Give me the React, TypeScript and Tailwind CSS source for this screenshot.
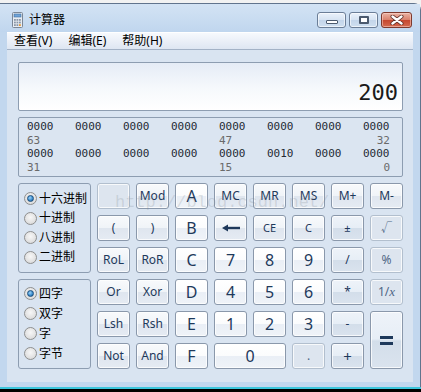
import type { ReactNode } from 'react';

type Kind = 'fn' | 'num' | 'op' | 'off';

const kindCls: Record<Kind, string> = {
  fn: 'border-[#8a98ab] bg-[linear-gradient(to_bottom,#f8fafc_0%,#f0f4f8_48%,#dfe6ef_52%,#e5ebf3_100%)] text-[#1e395b]',
  num: 'border-[#8a98ab] bg-[linear-gradient(to_bottom,#ffffff_0%,#fbfcfd_48%,#eaeff6_52%,#eff3f8_100%)] text-[#1e395b]',
  op: 'border-[#8a98ab] bg-[linear-gradient(to_bottom,#eef3f9_0%,#e7eef6_48%,#d3deea_52%,#dae3ee_100%)] text-[#1e395b]',
  off: 'border-[#b2bfce] bg-[#dde5ef] text-[#4f6786]',
};

const Key = ({ kind = 'fn', size = 'text-[12px]', className = '', children }: { kind?: Kind; size?: string; className?: string; children?: ReactNode }) => (
  <div
    className={`flex items-center justify-center rounded-[3px] border shadow-[inset_0_0_0_1px_rgba(255,255,255,0.75)] ${kindCls[kind]} ${size} ${className}`}
  >
    {children}
  </div>
);

const Radio = ({ label, checked = false }: { label: string; checked?: boolean }) => (
  <div className="flex h-[19.5px] items-center gap-[2px]">
    <span className="flex h-[13px] w-[13px] items-center justify-center rounded-full border border-[#8e8f8f] bg-[radial-gradient(circle_at_50%_40%,#f7f7f7_0%,#e2e2e2_60%,#d0d0d0_100%)]">
      {checked && (
        <span className="h-[7px] w-[7px] rounded-full border border-[#1b4f7e] bg-[radial-gradient(circle_at_40%_35%,#9fd2f5_0%,#3d8fd0_55%,#17548f_100%)]" />
      )}
    </span>
    <span className="text-[12px] leading-none text-black">{label}</span>
  </div>
);

const bitsTop = ['0000', '0000', '0000', '0000', '0000', '0000', '0000', '0000'];
const bitsBottom = ['0000', '0000', '0000', '0000', '0000', '0010', '0000', '0000'];

const BitRow = ({ groups }: { groups: string[] }) => (
  <div className="flex justify-between text-[#252b34]">
    {groups.map((g, i) => (
      <span key={i} className="w-[27px]">{g}</span>
    ))}
  </div>
);

const LabelRow = ({ a, b, c }: { a: string; b: string; c: string }) => (
  <div className="flex justify-between text-[#6a6a6a]">
    {[a, '', '', '', b, '', '', c].map((t, i) => (
      <span key={i} className={`w-[27px] ${i === 7 ? 'text-right' : ''}`}>{t}</span>
    ))}
  </div>
);

const CalcIcon = () => (
  <svg width="11" height="16" viewBox="0 0 11 16">
    <rect x="0.5" y="0.5" width="10" height="15" rx="1" fill="#e8edf3" stroke="#7b8796" />
    <rect x="2" y="2" width="7" height="3" fill="#6fa3d8" stroke="#3d6e9f" strokeWidth="0.6" />
    {[0, 1, 2].map(r =>
      [0, 1, 2].map(c => (
        <rect key={`${r}${c}`} x={2 + c * 2.5} y={7 + r * 2.6} width="1.8" height="1.8" fill={r === 2 && c === 2 ? '#e7962f' : '#8a96a6'} />
      ))
    )}
  </svg>
);

export default function App() {
  return (
    <div className="relative flex h-[392px] w-[421px] flex-col overflow-hidden bg-[#f2f2f2] font-['Noto_Sans','Noto_Sans_CJK_SC',sans-serif]">
      <div className="h-[3px] shrink-0" />

      <div className="flex flex-1 flex-col rounded-tr-[7px] border-t border-r border-[#61748d] bg-[#c2d7ee]">
        {/* title bar */}
        <div className="flex h-[28px] shrink-0 items-center bg-[linear-gradient(to_bottom,#d3e3f4,#c0d6ee)] pl-[12px] pr-[8px] pt-[4px]">
          <CalcIcon />
          <span className="ml-[6px] text-[12px] leading-none text-black">计算器</span>
          <div className="ml-auto flex gap-[3px]">
            <div className="flex h-[16px] w-[29px] items-end justify-center rounded-[3px] border border-[#6b7e97] bg-[linear-gradient(to_bottom,#eaf2fb_0%,#d6e3f2_50%,#c3d5ea_51%,#cfdff0_100%)] pb-[3px] shadow-[inset_0_0_0_1px_rgba(255,255,255,0.6)]">
              <span className="h-[4px] w-[12px] rounded-[1px] border border-[#4b5a6e] bg-white" />
            </div>
            <div className="flex h-[16px] w-[29px] items-center justify-center rounded-[3px] border border-[#6b7e97] bg-[linear-gradient(to_bottom,#eaf2fb_0%,#d6e3f2_50%,#c3d5ea_51%,#cfdff0_100%)] shadow-[inset_0_0_0_1px_rgba(255,255,255,0.6)]">
              <span className="h-[8px] w-[10px] rounded-[1px] border-2 border-[#4b5a6e] bg-white" />
            </div>
            <div className="flex h-[16px] w-[31px] items-center justify-center rounded-[3px] border border-[#7e3a2e] bg-[linear-gradient(to_bottom,#eab3a4_0%,#d9806b_50%,#c5472f_51%,#d46a4f_100%)] shadow-[inset_0_0_0_1px_rgba(255,220,210,0.5)]">
              <svg width="14" height="10" viewBox="0 0 14 10">
                <path d="M2.5 1.5 L11.5 8.5 M11.5 1.5 L2.5 8.5" stroke="#5a2a22" strokeWidth="4" strokeLinecap="round" />
                <path d="M2.5 1.5 L11.5 8.5 M11.5 1.5 L2.5 8.5" stroke="#ffffff" strokeWidth="2.4" strokeLinecap="round" />
              </svg>
            </div>
          </div>
        </div>

        <div className="flex flex-1 flex-col pl-[7px] pr-[7px]">
          {/* menu bar */}
          <div className="flex h-[18px] shrink-0 items-center gap-[16px] border-t border-b border-t-white border-b-[#a3b2c6] bg-[linear-gradient(to_bottom,#f7f9fd,#dee6f2)] pl-[7px] text-[12px] leading-none text-black">
            <span>查看(V)</span>
            <span>编辑(E)</span>
            <span>帮助(H)</span>
          </div>

          {/* client */}
          <div className="relative flex flex-1 flex-col gap-[6px] bg-[#d9e4f1] pb-[13px] pl-[11px] pr-[10px] pt-[12px]">
            <div className="flex h-[49px] items-end justify-end rounded-[2px] border border-[#8d9db1] bg-[linear-gradient(to_bottom,#e5ecf6_0%,#f6f9fc_55%,#ffffff_100%)] pb-[6px] pr-[4px]">
              <span className="font-['DejaVu_Sans_Mono',monospace] text-[22px] leading-none text-[#1a1a1a]">200</span>
            </div>

            <div className="flex h-[60px] flex-col rounded-[2px] border border-[#8d9db1] bg-[#dbe5f1] pl-[8px] pr-[12px] pt-[2px] font-['DejaVu_Sans_Mono',monospace] text-[11px] leading-[13.5px]">
              <BitRow groups={bitsTop} />
              <LabelRow a="63" b="47" c="32" />
              <BitRow groups={bitsBottom} />
              <LabelRow a="31" b="15" c="0" />
            </div>

            <div className="grid grid-cols-[73px_repeat(8,33px)] grid-rows-[repeat(6,26px)] gap-[6px]">
              <div className="row-span-3 flex flex-col rounded-[3px] border border-[#8d9db1] pl-[5px] pt-[5px]">
                <Radio label="十六进制" checked />
                <Radio label="十进制" />
                <Radio label="八进制" />
                <Radio label="二进制" />
              </div>
              <Key kind="off" />
              <Key>Mod</Key>
              <Key kind="num" size="text-[16px]">A</Key>
              <Key>MC</Key>
              <Key>MR</Key>
              <Key>MS</Key>
              <Key>M+</Key>
              <Key>M-</Key>

              <Key>(</Key>
              <Key>)</Key>
              <Key kind="num" size="text-[16px]">B</Key>
              <Key>
                <svg width="18" height="8" viewBox="0 0 18 8">
                  <polygon points="0,4 6,0.5 6,7.5" fill="#1e395b" />
                  <rect x="5" y="2.8" width="13" height="2.4" fill="#1e395b" />
                </svg>
              </Key>
              <Key size="text-[11px]">CE</Key>
              <Key size="text-[11px]">C</Key>
              <Key kind="op" size="text-[11px]">±</Key>
              <Key kind="off" size="text-[11px]">√</Key>

              <Key>RoL</Key>
              <Key>RoR</Key>
              <Key kind="num" size="text-[16px]">C</Key>
              <Key kind="num" size="text-[16px]">7</Key>
              <Key kind="num" size="text-[16px]">8</Key>
              <Key kind="num" size="text-[16px]">9</Key>
              <Key kind="op">/</Key>
              <Key kind="off">%</Key>

              <div className="row-span-3 flex flex-col rounded-[3px] border border-[#8d9db1] pl-[5px] pt-[4px]">
                <div className="flex flex-col gap-[0.5px]">
                  <Radio label="四字" checked />
                  <Radio label="双字" />
                  <Radio label="字" />
                  <Radio label="字节" />
                </div>
              </div>
              <Key>Or</Key>
              <Key>Xor</Key>
              <Key kind="num" size="text-[16px]">D</Key>
              <Key kind="num" size="text-[16px]">4</Key>
              <Key kind="num" size="text-[16px]">5</Key>
              <Key kind="num" size="text-[16px]">6</Key>
              <Key kind="op">*</Key>
              <Key kind="off">
                1/<span className="font-['Liberation_Serif',serif] text-[13px] italic">x</span>
              </Key>

              <Key>Lsh</Key>
              <Key>Rsh</Key>
              <Key kind="num" size="text-[16px]">E</Key>
              <Key kind="num" size="text-[16px]">1</Key>
              <Key kind="num" size="text-[16px]">2</Key>
              <Key kind="num" size="text-[16px]">3</Key>
              <Key kind="op">-</Key>
              <Key kind="op" className="row-span-2">
                <span className="flex flex-col gap-[3px]">
                  <span className="h-[3px] w-[13px] bg-[#1e395b]" />
                  <span className="h-[3px] w-[13px] bg-[#1e395b]" />
                </span>
              </Key>

              <Key>Not</Key>
              <Key>And</Key>
              <Key kind="num" size="text-[16px]">F</Key>
              <Key kind="num" size="text-[16px]" className="col-span-2">0</Key>
              <Key kind="off">.</Key>
              <Key kind="op" size="text-[15px]">+</Key>
            </div>

            {/* watermark */}
            <span className="pointer-events-none absolute left-[108px] top-[144px] font-['Liberation_Mono',monospace] text-[17px] leading-none text-[rgba(120,130,140,0.22)]">
              http://blog.csdn.net/
            </span>
          </div>
        </div>

        <div className="h-[5px] shrink-0" />
      </div>

      <div className="h-[2px] shrink-0 bg-[#3cc6dc]" />
      <div className="h-[3px] shrink-0 bg-black" />
    </div>
  );
}
